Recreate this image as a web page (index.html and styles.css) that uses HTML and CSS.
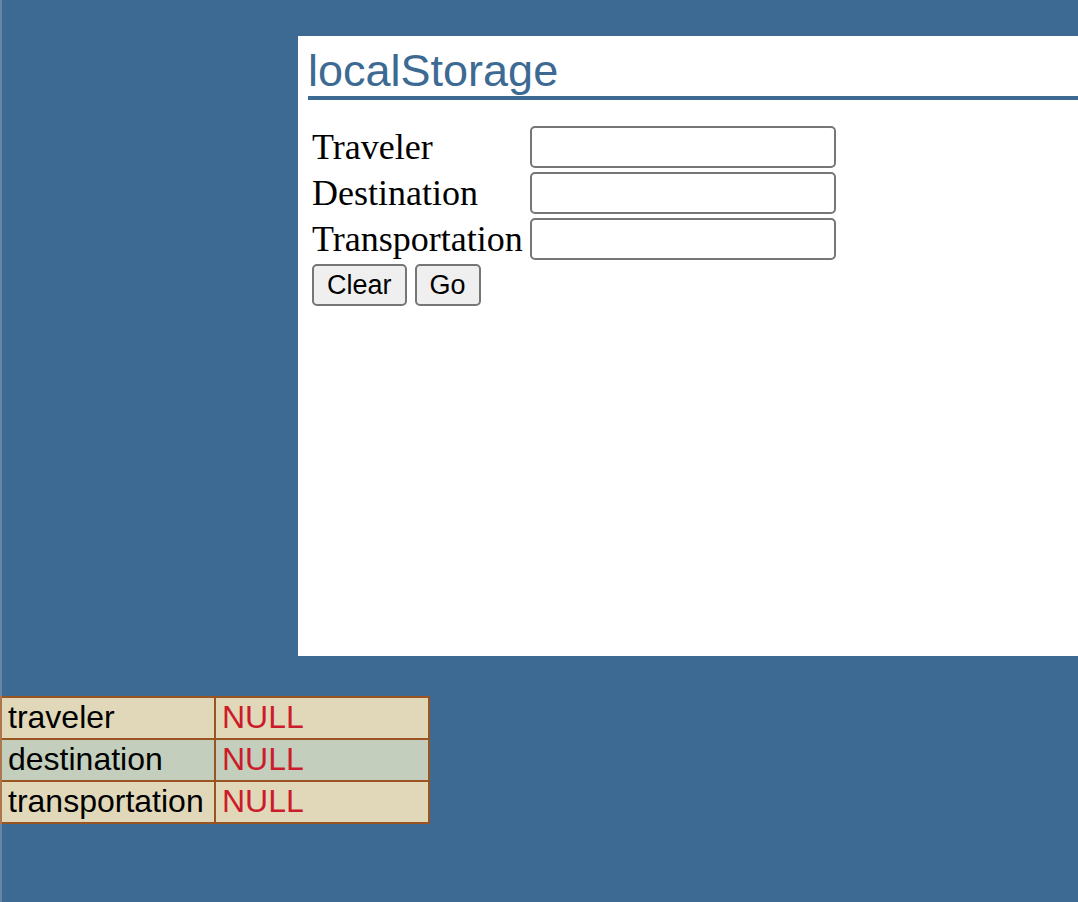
FILE: index.html
```html
<!DOCTYPE html>
<html lang="en">
<head>
<meta charset="utf-8">
<title>localStorage</title>
<link rel="stylesheet" href="styles.css">
</head>
<body class="page">
<main class="panel">
<h1 class="title">localStorage</h1>
<form class="form">
<div class="fields">
<label class="label" for="traveler">Traveler</label>
<input class="input" type="text" id="traveler">
<label class="label" for="destination">Destination</label>
<input class="input" type="text" id="destination">
<label class="label" for="transportation">Transportation</label>
<input class="input" type="text" id="transportation">
</div>
<div class="actions">
<button class="button" type="button">Clear</button>
<button class="button" type="button">Go</button>
</div>
</form>
</main>
<table class="storage">
<tbody>
<tr class="row"><td class="cell">traveler</td><td class="cell value">NULL</td></tr>
<tr class="row"><td class="cell">destination</td><td class="cell value">NULL</td></tr>
<tr class="row"><td class="cell">transportation</td><td class="cell value">NULL</td></tr>
</tbody>
</table>
<div class="edge"></div>
</body>
</html>
```

FILE: styles.css
```css
* {
  box-sizing: border-box;
}

.page {
  margin: 0;
  padding-top: 36px;
  min-height: 100vh;
  background: #3d6a93;
  font-family: "Liberation Sans", Arial, sans-serif;
  color: #000;
}

.panel {
  margin-left: 298px;
  padding: 10px 0 10px 10px;
  min-height: 620px;
  background: #fff;
}

.title {
  margin: 0 0 26px;
  border-bottom: 4px solid #3d6a93;
  font-size: 45px;
  line-height: 50px;
  font-weight: 400;
  color: #3d6a93;
}

.form {
  display: flex;
  flex-direction: column;
  gap: 4px;
  padding-left: 4px;
}

.fields {
  display: grid;
  grid-template-columns: 214px 306px;
  column-gap: 4px;
  row-gap: 4px;
}

.label {
  font-family: Georgia, "Liberation Serif", serif;
  font-size: 36px;
  line-height: 42px;
}

.input {
  width: 100%;
  height: 42px;
  padding: 2px 4px;
  border: 2px solid #767676;
  border-radius: 5px;
  background: #fff;
  font: 27px "Liberation Sans", Arial, sans-serif;
}

.actions {
  display: flex;
  gap: 8px;
}

.button {
  height: 42px;
  padding: 0 13px;
  border: 2px solid #767676;
  border-radius: 5px;
  background: #efefef;
  font: 27px "Liberation Sans", Arial, sans-serif;
  color: #000;
}

.storage {
  width: 430px;
  margin-top: 40px;
  border-collapse: collapse;
  table-layout: fixed;
}

.row {
  background: #e1d8b9;
}

.row:nth-child(even) {
  background: #c3cebd;
}

.cell {
  padding: 0 6px 2px;
  border: 2px solid #9a5421;
  font-size: 32px;
  line-height: 38px;
}

.value {
  color: #cc1c2b;
}

/* Translucent highlight along the window's left edge */
.edge {
  position: fixed;
  inset: 0 auto 0 0;
  width: 2px;
  background: rgba(255, 255, 255, 0.2);
}
```
